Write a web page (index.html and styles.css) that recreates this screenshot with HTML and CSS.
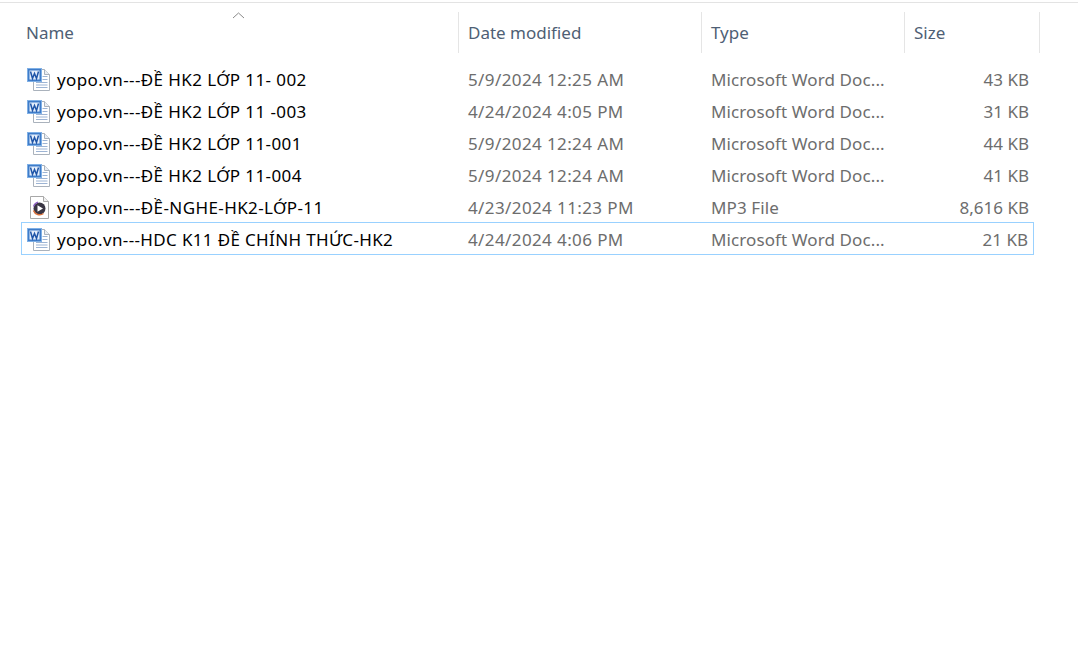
FILE: index.html
```html
<!DOCTYPE html>
<html lang="en">
<head>
<meta charset="UTF-8">
<title>Explorer</title>
<link rel="stylesheet" href="styles.css">
</head>
<body>
<svg class="defs" width="0" height="0">
    <symbol id="word" viewBox="0 0 24 24">
        <path d="M6.5 1.5H17.5L22.5 6.5V22.5H6.5Z" fill="#fff" stroke="#aab2bc"/>
        <path d="M17.5 1.5V6.5H22.5" fill="#e8edf4" stroke="#aab2bc"/>
        <path d="M15.5 8.5H20.5M15.5 11.5H20.5M9 14.5H20.5M9 17H20.5M9 19.5H20.5" stroke="#9db4d4"/>
        <rect x="0.5" y="0.5" width="14" height="13" fill="#3f7cc9" stroke="#7fb0e6"/>
        <rect x="2.5" y="2.5" width="10" height="9" fill="#e4eefb"/>
        <path d="M3.5 3.5L5.5 10.5L7.5 5.5L9.5 10.5L11.5 3.5" fill="none" stroke="#1f55a8" stroke-width="1.5"/>
    </symbol>
    <symbol id="mp3" viewBox="0 0 24 24">
        <path d="M3.5 0.5H16.5L21.5 5.5V22.5H3.5Z" fill="#fff" stroke="#a8a8a8"/>
        <path d="M16.5 0.5V5.5H21.5" fill="#f0f0f0" stroke="#a8a8a8"/>
        <circle cx="12.5" cy="12.5" r="6" fill="#3a3644"/>
        <path d="M6.5 14.5A6.5 6.5 0 0 0 16.5 17.5" fill="none" stroke="#d9703a" stroke-width="1.5"/>
        <path d="M6.5 10.5A6.5 6.5 0 0 1 11 6.2" fill="none" stroke="#8d5fc0" stroke-width="1.2"/>
        <path d="M10.5 9.3L16 12.5L10.5 15.7Z" fill="#fff"/>
    </symbol>
</svg>

<div class="list">
    <svg class="sort-arrow" width="13" height="7" viewBox="0 0 13 7"><path d="M1 6L6.5 1L12 6" fill="none" stroke="#8a8a8a"/></svg>

    <div class="columns">
        <div class="col">Name</div>
        <div class="col">Date modified</div>
        <div class="col">Type</div>
        <div class="col">Size</div>
    </div>

    <div class="rows">
        <div class="row">
            <div class="name"><svg class="icon"><use href="#word"/></svg><span class="label">yopo.vn---ĐỀ HK2 LỚP 11- 002</span></div>
            <div class="cell date">5/9/2024 12:25 AM</div>
            <div class="cell type">Microsoft Word Doc...</div>
            <div class="cell size">43 KB</div>
        </div>
        <div class="row">
            <div class="name"><svg class="icon"><use href="#word"/></svg><span class="label">yopo.vn---ĐỀ HK2 LỚP 11 -003</span></div>
            <div class="cell date">4/24/2024 4:05 PM</div>
            <div class="cell type">Microsoft Word Doc...</div>
            <div class="cell size">31 KB</div>
        </div>
        <div class="row">
            <div class="name"><svg class="icon"><use href="#word"/></svg><span class="label">yopo.vn---ĐỀ HK2 LỚP 11-001</span></div>
            <div class="cell date">5/9/2024 12:24 AM</div>
            <div class="cell type">Microsoft Word Doc...</div>
            <div class="cell size">44 KB</div>
        </div>
        <div class="row">
            <div class="name"><svg class="icon"><use href="#word"/></svg><span class="label">yopo.vn---ĐỀ HK2 LỚP 11-004</span></div>
            <div class="cell date">5/9/2024 12:24 AM</div>
            <div class="cell type">Microsoft Word Doc...</div>
            <div class="cell size">41 KB</div>
        </div>
        <div class="row">
            <div class="name"><svg class="icon"><use href="#mp3"/></svg><span class="label">yopo.vn---ĐỀ-NGHE-HK2-LỚP-11</span></div>
            <div class="cell date">4/23/2024 11:23 PM</div>
            <div class="cell type">MP3 File</div>
            <div class="cell size">8,616 KB</div>
        </div>
        <div class="row selected">
            <div class="name"><svg class="icon"><use href="#word"/></svg><span class="label">yopo.vn---HDC K11 ĐỀ CHÍNH THỨC-HK2</span></div>
            <div class="cell date">4/24/2024 4:06 PM</div>
            <div class="cell type">Microsoft Word Doc...</div>
            <div class="cell size">21 KB</div>
        </div>
    </div>
</div>
</body>
</html>
```

FILE: styles.css
```css
html, body {
    margin: 0;
    padding: 0;
    background-color: #fff;
}

body {
    font-family: "Noto Sans", "Open Sans", sans-serif;
    font-size: 17px;
    height: 659px;
    overflow: hidden;
}

.defs {
    display: block;
    height: 0;
}

.list {
    position: relative;
    margin-top: 2px;
    border-top: 1px solid #e3e3e3;
    padding-top: 9px;
}

.sort-arrow {
    position: absolute;
    left: 232px;
    top: 9px;
}

.columns {
    display: grid;
    grid-template-columns: 438px 243px 203px 135px;
    margin-left: 21px;
    height: 41px;
}

.col {
    border-right: 1px solid #e5e5e5;
    padding-left: 9px;
    line-height: 41px;
    color: #4f5f75;
}

.col:first-child {
    padding-left: 5px;
}

.rows {
    margin-top: 10px;
    margin-left: 21px;
    width: 1013px;
}

.row {
    display: grid;
    grid-template-columns: 437px 243px 203px 1fr;
    height: 32px;
    line-height: 34px;
    box-sizing: border-box;
    color: #6d6d6d;
}

.row.selected {
    border: 1px solid #99d1ff;
    margin-top: -1px;
    height: 33px;
    grid-template-columns: 436px 243px 203px 1fr;
}

.name {
    display: flex;
    align-items: center;
    color: #000;
    padding-left: 6px;
}

.label {
    letter-spacing: 0.4px;
}

.selected .label {
    letter-spacing: 0.35px;
}

.icon {
    width: 24px;
    height: 24px;
    margin-right: 6px;
    flex: none;
}

.selected .name {
    padding-left: 5px;
}

.cell {
    padding-left: 10px;
}

.date {
    letter-spacing: 0.39px;
}

.type {
    letter-spacing: 0.1px;
}

.size {
    text-align: right;
    padding-right: 5px;
}
```
